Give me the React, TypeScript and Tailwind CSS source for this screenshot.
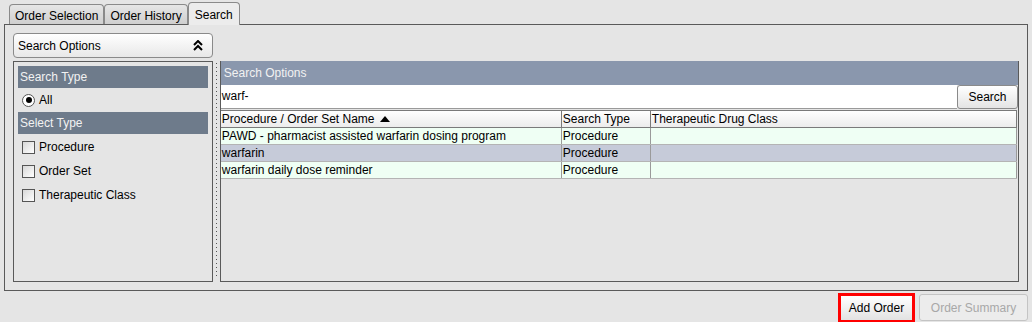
import React from "react";

const rows = [
  { name: "PAWD - pharmacist assisted warfarin dosing program", type: "Procedure", cls: "", selected: false },
  { name: "warfarin", type: "Procedure", cls: "", selected: true },
  { name: "warfarin daily dose reminder", type: "Procedure", cls: "", selected: false },
];

function DoubleChevron() {
  return (
    <svg width="10" height="11" viewBox="0 0 10 11" fill="none" stroke="#000" strokeWidth="2">
      <path d="M1 5 L5 1 L9 5" />
      <path d="M1 10 L5 6 L9 10" />
    </svg>
  );
}

function Tab({ label, active }: { label: string; active?: boolean }) {
  return (
    <div
      className={
        active
          ? "relative z-10 -mb-px h-[23px] px-[6px] pt-[3px] border border-b-0 border-[#8a8a8a] rounded-t-[4px] bg-[#ececec]"
          : "h-[20px] px-[5px] pt-[2px] border border-b-0 border-[#8a8a8a] rounded-t-[4px] bg-gradient-to-b from-[#e6e6e6] to-[#cfcfcf]"
      }
    >
      {label}
    </div>
  );
}

function SectionBar({ label }: { label: string }) {
  return <div className="h-[22px] bg-[#6e7b8b] text-[#f2f2f2] pl-[2px] leading-[22px]">{label}</div>;
}

function Check({ label }: { label: string }) {
  return (
    <div className="h-[24px] flex items-center gap-[4px] pl-[4px]">
      <div className="w-[13px] h-[13px] border border-[#555] bg-gradient-to-br from-[#d8d8d8] to-white" />
      <span>{label}</span>
    </div>
  );
}

export default function App() {
  return (
    <div
      className="w-[1032px] h-[322px] bg-[#e5e5e5] text-[12px] text-black overflow-hidden"
      style={{ fontFamily: '"Liberation Sans", Arial, sans-serif' }}
    >
      {/* tabs */}
      <div className="flex items-end h-[24px] pl-[9px]">
        <Tab label="Order Selection" />
        <Tab label="Order History" />
        <Tab label="Search" active />
      </div>

      {/* tab body */}
      <div className="ml-[4px] w-[1024px] h-[267px] border border-[#5a5a5a] px-[8px] pt-[8px] flex flex-col">
        <div className="w-[200px] h-[25px] rounded-[4px] border border-[#8a8a8a] bg-gradient-to-b from-white to-[#e8e8e8] flex items-center justify-between pl-[4px] pr-[9px]">
          <span>Search Options</span>
          <DoubleChevron />
        </div>

        <div className="mt-[3px] flex h-[221px]">
          {/* left options */}
          <div className="w-[200px] h-full border border-[#5a5a5a] p-[4px] flex flex-col">
            <SectionBar label="Search Type" />
            <div className="h-[24px] flex items-center gap-[4px] pl-[4px]">
              <div className="w-[13px] h-[13px] rounded-full border border-[#555] bg-white flex items-center justify-center">
                <div className="w-[6px] h-[6px] rounded-full bg-black" />
              </div>
              <span>All</span>
            </div>
            <SectionBar label="Select Type" />
            <div className="h-[1px]" />
            <Check label="Procedure" />
            <Check label="Order Set" />
            <Check label="Therapeutic Class" />
          </div>

          {/* splitter */}
          <div className="w-[7px] flex justify-center pt-[2px]">
            <div className="w-[1px] h-[216px] bg-[repeating-linear-gradient(to_bottom,#555_0px,#555_1px,transparent_1px,transparent_4px)]" />
          </div>

          {/* right results */}
          <div className="w-[800px] h-full border border-[#5a5a5a] border-t-0 flex flex-col">
            <div className="h-[24px] bg-[#8a97ad] text-[#f2f2f2] pl-[3px] leading-[24px]">Search Options</div>
            <div className="flex h-[24px]">
              <div className="flex-1 bg-white border-b border-[#9a9a9a] pl-[1px] leading-[23px]">warf-</div>
              <button className="w-[61px] h-[24px] rounded-[3px] border border-[#8a8a8a] bg-gradient-to-b from-white to-[#e4e4e4] text-black">
                Search
              </button>
            </div>
            <div className="mt-[1px] mr-[1px] border-t border-[#7a7a7a]">
              <div className="flex h-[17px] bg-gradient-to-b from-white to-[#ececec] border-b border-[#7a7a7a]">
                <div className="w-[341px] border-r border-[#7a7a7a] pl-[1px] flex items-center gap-[5px]">
                  <span>Procedure / Order Set Name</span>
                  <svg width="10" height="6" viewBox="0 0 10 6">
                    <path d="M0 6 L5 0 L10 6 Z" fill="#000" />
                  </svg>
                </div>
                <div className="w-[89px] border-r border-[#7a7a7a] pl-[1px] leading-[16px]">Search Type</div>
                <div className="flex-1 pl-[1px] leading-[16px] border-r border-[#7a7a7a]">Therapeutic Drug Class</div>
              </div>
              {rows.map((r) => (
                <div
                  key={r.name}
                  className={`flex h-[17px] border-b border-[#b4b4b4] ${r.selected ? "bg-[#c6cbd9]" : "bg-[#effff4]"}`}
                >
                  <div className="w-[341px] border-r border-[#9a9a9a] pl-[1px] leading-[16px]">{r.name}</div>
                  <div className="w-[89px] border-r border-[#9a9a9a] pl-[1px] leading-[16px]">{r.type}</div>
                  <div className="flex-1 pl-[1px] leading-[16px] border-r border-[#9a9a9a]">{r.cls}</div>
                </div>
              ))}
            </div>
          </div>
        </div>
      </div>

      {/* bottom buttons */}
      <div className="flex justify-end gap-[4px] pr-[4px] pt-[2px]">
        <div className="w-[77px] h-[30px] border-[3px] border-[#ff0000] flex">
          <button className="flex-1 bg-gradient-to-b from-white to-[#e2e2e2] text-black">Add Order</button>
        </div>
        <button className="w-[109px] h-[27px] mt-[1px] rounded-[3px] border border-[#c4c4c4] bg-[#ececec] text-[#a8a8a8]">
          Order Summary
        </button>
      </div>
    </div>
  );
}
